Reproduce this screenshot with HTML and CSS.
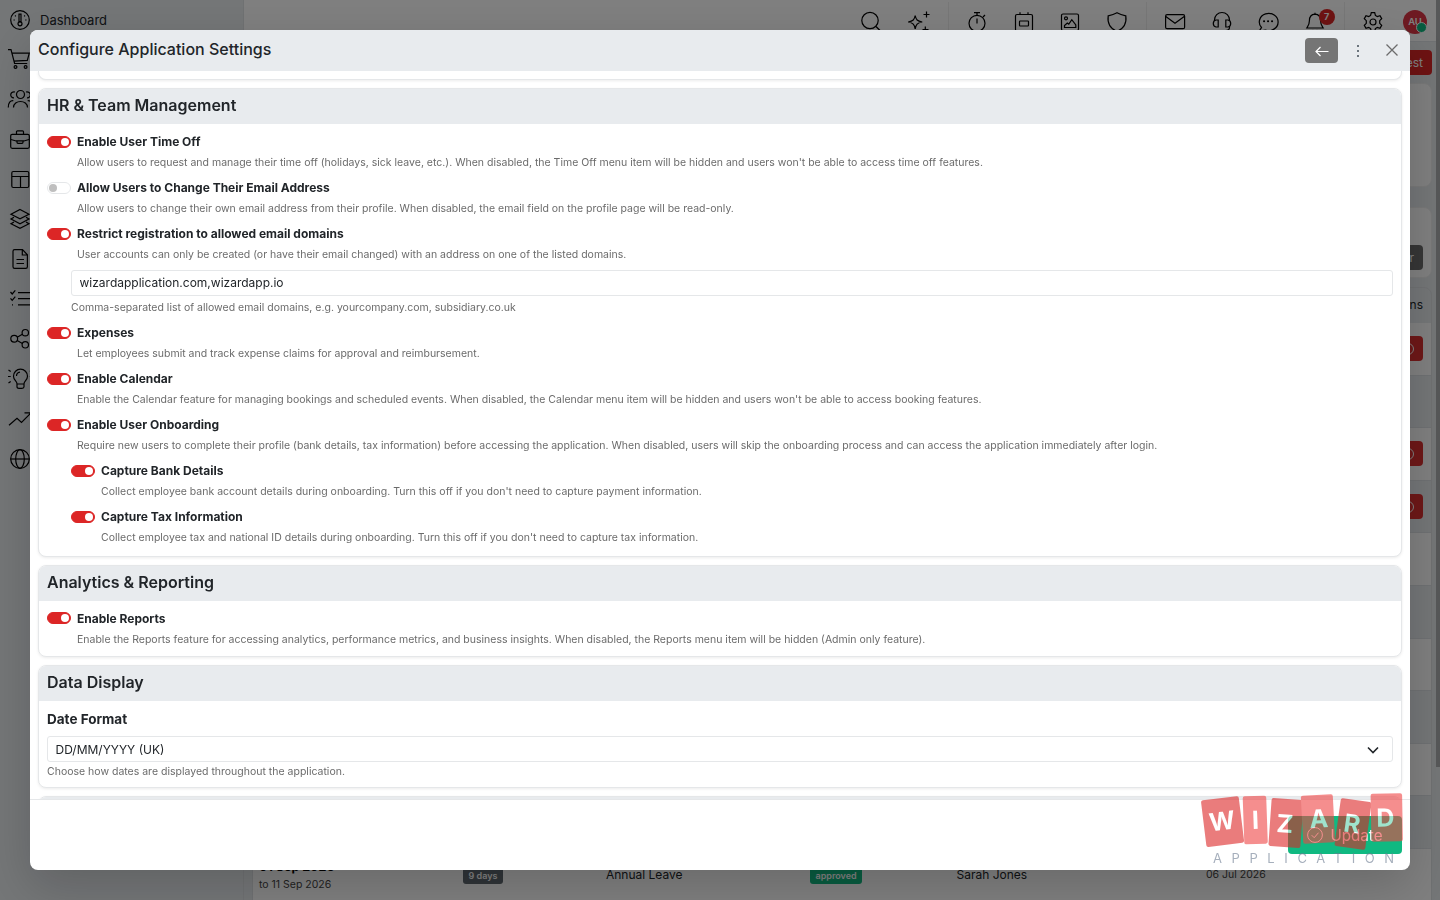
FILE: index.html
```html
<!DOCTYPE html>
<html lang="en">
<head>
  <meta charset="UTF-8" />
  <meta name="viewport" content="width=device-width, initial-scale=1.0">
  <title>Configure Application Settings</title>
  <link rel="stylesheet" href="styles.css">
</head>
<body>
  <div class="app">
    <nav class="sidebar">
      <a class="nav-item"><svg class="icon" viewBox="0 0 20 20"><circle cx="10" cy="10" r="9.3"/><path d="M9 4.2h2v7.5H9zM3.5 10h1.3M15.2 10h1.3M5 5.5l.8.8M15 5.5l-.8.8"/><circle cx="10" cy="13.8" r="2"/></svg><span>Dashboard</span></a>
      <a class="nav-item"><svg class="icon" viewBox="0 0 20 20"><path d="M-2-.3H1l3.6 13.8h12.6M1.9 3.2h17.4l-2 7.2-13.3.8"/><circle cx="5.5" cy="17" r="1.4"/><circle cx="15.6" cy="17" r="1.4"/></svg></a>
      <a class="nav-item"><svg class="icon" viewBox="0 0 20 20"><circle cx="10.500" cy="4.500" r="4"/><path d="M3.500 17.500c0-8 14-8 14 0M5 2C-.5 1-.5 8 4 7.800M-1.700 17.500c0-5 2-7 5-6.800M16 2c5.500-1 5.500 6 1 5.800M22.700 17.500c0-5-2-7-5-6.800"/></svg></a>
      <a class="nav-item"><svg class="icon" viewBox="0 0 20 20"><rect x=".7" y="4.300" width="18.600" height="14" rx="1.500"/><path d="M6.500 4V1.800q0-1 1-1h5q1 0 1 1V4M1 9.500l6 1.800M19 9.500l-6 1.800M7 10.800h6v1.500q0 1-1 1H8q-1 0-1-1z"/></svg></a>
      <a class="nav-item"><svg class="icon" viewBox="0 0 20 20"><rect x="1.800" y="1.500" width="17" height="16" rx="1.500"/><path d="M2 6.500h17M10.500 6.500v11"/></svg></a>
      <a class="nav-item"><svg class="icon" viewBox="0 0 20 20"><path d="M10 .5l9 4.700-9 4.700-9-4.700zM4 8.300L1 10l9 4.700 9-4.700-3-1.700M4 13L1 14.700l9 4.700 9-4.700-3-1.700"/></svg></a>
      <a class="nav-item"><svg class="icon" viewBox="0 0 20 20"><path d="M12.500.7H4.600q-1.600 0-1.600 1.600v15.400q0 1.600 1.600 1.600h11.200q1.600 0 1.600-1.600V5.800zM12.300 1v5h5M6.500 10.500h7.500M6.500 14.500h7.500"/></svg></a>
      <a class="nav-item"><svg class="icon" viewBox="0 0 20 20"><path d="M8 3.700h14M8 9.700h14M8 15.800h14M.5 3l1.700 2L5.300 1.400M.5 9.300l1.700 2 3.100-3.600M2 15.800h1"/></svg></a>
      <a class="nav-item"><svg class="icon" viewBox="0 0 20 20"><circle cx="4.200" cy="9.800" r="3.400"/><circle cx="15.300" cy="3.700" r="3.200"/><circle cx="15.300" cy="15.800" r="3.200"/><path d="M7.200 8.300l5.200-3M7.200 11.500l5.200 3"/></svg></a>
      <a class="nav-item"><svg class="icon" viewBox="0 0 20 20"><path d="M7 14.800c0-3-3.500-3.700-3.500-7.600a7 7 0 0114 0c0 3.900-3.500 4.600-3.500 7.600v3q0 1.500-2 1.500H9q-2 0-2-1.500zM7 15h7M6.500 7c0-2 1.500-3.500 3.500-3.800M-1.500 1l2.200 1.500M-2 7.500H.7M-1.500 14l2.200-1.500M22 1l-2.200 1.500M22.500 7.500h-2.700"/></svg></a>
      <a class="nav-item"><svg class="icon" viewBox="0 0 20 20"><path d="M-1 16.200l8-7 4.500 4.300L21 3.800M14.500 3.800H21v6"/></svg></a>
      <a class="nav-item"><svg class="icon" viewBox="0 0 20 20"><circle cx="10" cy="10" r="9.300"/><ellipse cx="10" cy="10" rx="4.300" ry="9.300"/><path d="M.7 10h18.600"/></svg></a>
    </nav>

    <div class="main">
      <header class="topbar">
        <div class="tools">
          <svg class="icon" viewBox="0 0 20 20"><circle cx="9" cy="8.500" r="8.200"/><path d="M15 14.500l5 5"/></svg>
          <svg class="icon" viewBox="0 0 20 20"><path d="M7.200 3.500c.8 4.200 2 5.500 7 6.500-5 1-6.200 2.400-7 7-.8-4.600-2-6-7-7 5-1 6.200-2.300 7-6.500zM18.500-.5v6M15.500 2.500h6M17.300 14.500v6M14.500 17.500h6"/></svg>
        </div>
        <div class="tools">
          <svg class="icon" viewBox="0 0 20 20"><circle cx="10" cy="11.300" r="8"/><path d="M7 .6h6M10 .6v3M10 6.500v5M16 5l2-2"/></svg>
          <svg class="icon" viewBox="0 0 20 20"><rect x="1.500" y="2.500" width="17" height="16.500" rx="1.500"/><path d="M6 .2v2.500M14 .2v2.500"/><rect x="5.500" y="9" width="9" height="5" rx=".7"/></svg>
          <svg class="icon" viewBox="0 0 20 20"><rect x="1.500" y="2" width="17" height="16.500" rx="1.500"/><circle cx="6" cy="6.300" r="1.500"/><path d="M4.500 15.500v-2L7.300 11l1.500 1.200 3-4.500 4 5.300v2.500z"/></svg>
          <svg class="icon" viewBox="0 0 20 20"><path d="M10 .8c2.500 1.400 5.200 2.300 8.800 3 1 7.200-1.500 12.500-8.800 15.700C2.700 16.300.2 11 1.200 3.800 4.800 3.100 7.500 2.200 10 .8z"/></svg>
        </div>
        <div class="tools">
          <svg class="icon" viewBox="0 0 20 20"><rect x=".6" y="2.700" width="19" height="14" rx="1.500"/><path d="M.8 4.500l9.200 6.700 9.200-6.700"/></svg>
          <svg class="icon" viewBox="0 0 20 20"><path d="M2.500 9V8a7.500 7.500 0 0115 0v1M17.500 14v1.500q0 3-4 3"/><path d="M6.200 8v7H4q-2.700-.5-2.700-3.500T4 8zM13.800 8v7H16q2.700-.5 2.700-3.500T16 8z"/></svg>
          <svg class="icon" viewBox="0 0 20 20"><path d="M3.500 15.500a9.400 8.600 0 113.800 2.500L1 19.300z"/><path class="dots" d="M6 9.300h.1M10 9.300h.1M14 9.300h.1"/></svg>
          <span class="bell"><svg class="icon" viewBox="0 0 20 20"><path d="M10 2.200V.8M10 2.200c-4.500.3-5.600 3.500-5.600 6.500 0 4-1.500 5.500-2.600 7.300h16.400c-1.100-1.800-2.600-3.300-2.600-7.300 0-3-1.100-6.200-5.600-6.500zM7.500 18c.8 2 4.200 2 5 0"/></svg><b>7</b></span>
        </div>
        <div class="tools last">
          <svg class="icon" viewBox="0 0 20 20"><path d="M8.300.7h3.400l.7 2.700 1.900 1.100 2.700-.8 1.700 3-2 2v2.600l2 2-1.700 3-2.700-.8-1.900 1.100-.7 2.700H8.300l-.7-2.700-1.900-1.100-2.700.8-1.700-3 2-2V8.700l-2-2 1.700-3 2.700.8 1.900-1.100z"/><circle cx="10" cy="10" r="3"/></svg>
          <span class="avatar">AU</span>
        </div>
      </header>

      <div class="content">
        <div class="page-actions"><span class="btn-request">Request</span></div>
        <div class="panel summary"></div>
        <div class="panel filters"><span class="btn-filter">Filter</span></div>
        <div class="table">
          <div class="thead">Actions</div>
          <div class="tr"><span class="btn-cancel"><i></i></span></div>
          <div class="tr"></div>
          <div class="tr"><span class="btn-cancel"><i></i></span></div>
          <div class="tr"><span class="btn-cancel"><i></i></span></div>
          <div class="tr"></div>
          <div class="tr"></div>
          <div class="tr"></div>
          <div class="tr"></div>
          <div class="tr"></div>
          <div class="tr"></div>
          <div class="tr leave">
            <div class="dates"><strong>01 Sep 2026</strong><span>to 11 Sep 2026</span></div>
            <div><span class="badge">9 days</span></div>
            <div>Annual Leave</div>
            <div><span class="badge approved">approved</span></div>
            <div>Sarah Jones</div>
            <div class="muted">06 Jul 2026</div>
          </div>
        </div>
      </div>
      <div class="scroll-thumb"></div>
    </div>
  </div>

  <div class="backdrop"></div>

  <div class="modal">
    <div class="modal-header">
      <h1>Configure Application Settings</h1>
      <button class="btn-back"><svg viewBox="0 0 14 12"><path d="M13.500 6.500H1M5.500 2L1 6.500 5.500 11"/></svg></button>
      <button class="btn-more"><svg viewBox="0 0 2 12"><path d="M0 0h2v2H0zM0 5h2v2H0zM0 10h2v2H0z"/></svg></button>
      <button class="btn-close"><svg viewBox="0 0 12 12"><path d="M.5.5l11 11M11.500.5l-11 11"/></svg></button>
    </div>

    <div class="modal-body">
      <section class="card card-end"></section>

      <section class="card">
        <h2>HR &amp; Team Management</h2>
        <div class="card-body team">
          <div class="option">
            <label><i class="switch on"></i>Enable User Time Off</label>
            <p>Allow users to request and manage their time off (holidays, sick leave, etc.). When disabled, the Time Off menu item will be hidden and users won't be able to access time off features.</p>
          </div>
          <div class="option">
            <label><i class="switch"></i>Allow Users to Change Their Email Address</label>
            <p>Allow users to change their own email address from their profile. When disabled, the email field on the profile page will be read-only.</p>
          </div>
          <div class="option">
            <label><i class="switch on"></i>Restrict registration to allowed email domains</label>
            <p>User accounts can only be created (or have their email changed) with an address on one of the listed domains.</p>
          </div>
          <div class="domains">
            <input type="text" value="wizardapplication.com,wizardapp.io">
            <small>Comma-separated list of allowed email domains, e.g. yourcompany.com, subsidiary.co.uk</small>
          </div>
          <div class="option">
            <label><i class="switch on"></i>Expenses</label>
            <p>Let employees submit and track expense claims for approval and reimbursement.</p>
          </div>
          <div class="option">
            <label><i class="switch on"></i>Enable Calendar</label>
            <p>Enable the Calendar feature for managing bookings and scheduled events. When disabled, the Calendar menu item will be hidden and users won't be able to access booking features.</p>
          </div>
          <div class="option">
            <label><i class="switch on"></i>Enable User Onboarding</label>
            <p>Require new users to complete their profile (bank details, tax information) before accessing the application. When disabled, users will skip the onboarding process and can access the application immediately after login.</p>
          </div>
          <div class="option nested">
            <label><i class="switch on"></i>Capture Bank Details</label>
            <p>Collect employee bank account details during onboarding. Turn this off if you don't need to capture payment information.</p>
          </div>
          <div class="option nested">
            <label><i class="switch on"></i>Capture Tax Information</label>
            <p>Collect employee tax and national ID details during onboarding. Turn this off if you don't need to capture tax information.</p>
          </div>
        </div>
      </section>

      <section class="card">
        <h2>Analytics &amp; Reporting</h2>
        <div class="card-body">
          <div class="option">
            <label><i class="switch on"></i>Enable Reports</label>
            <p>Enable the Reports feature for accessing analytics, performance metrics, and business insights. When disabled, the Reports menu item will be hidden (Admin only feature).</p>
          </div>
        </div>
      </section>

      <section class="card">
        <h2>Data Display</h2>
        <div class="card-body field">
          <h3>Date Format</h3>
          <div class="select"><span>DD/MM/YYYY (UK)</span><svg viewBox="0 0 12 8"><path d="M1 1.500l5 5 5-5"/></svg></div>
          <small>Choose how dates are displayed throughout the application.</small>
        </div>
      </section>

      <section class="card"><h2></h2></section>
    </div>

    <div class="modal-footer">
      <button class="btn-update"><svg viewBox="0 0 16 16"><circle cx="8" cy="8" r="7.400"/><path d="M4.700 8.200l2.500 2.500 4.300-5"/></svg>Update</button>
    </div>

    <!-- brand mark floats over the footer -->
    <svg class="brand" viewBox="0 0 210 80">
      <g class="dark">
        <rect x="3.500" y="8" width="38" height="47" rx="2" transform="rotate(-7 23 31)"/>
        <rect x="70" y="9" width="32" height="48" rx="2" transform="rotate(4 86 33)"/>
        <rect x="137.500" y="10" width="31" height="48" rx="2" transform="rotate(8 153 34)"/>
      </g>
      <g class="light">
        <rect x="43.500" y="6" width="23.500" height="48" rx="2" transform="rotate(-2 55 30)"/>
        <rect x="102" y="5" width="32" height="48" rx="2" transform="rotate(-3 117 29)"/>
        <rect x="171" y="3.500" width="31.500" height="48" rx="2" transform="rotate(-1 186 28)"/>
      </g>
      <g class="letters">
        <text x="22" y="40" transform="rotate(-7 22 31)">W</text>
        <text x="55.500" y="39" transform="rotate(-2 55 31)">I</text>
        <text x="85" y="42.500" transform="rotate(4 85 34)">Z</text>
        <text x="119" y="37.500" transform="rotate(-3 119 29)">A</text>
        <text x="152" y="42.500" transform="rotate(8 152 34)">R</text>
        <text x="185.500" y="36.500" transform="rotate(-1 185 28)">D</text>
      </g>
      <text class="tagline" x="13" y="73">APPLICATION</text>
    </svg>
  </div>
</body>
</html>
```
FILE: styles.css
```css
* {
  box-sizing: border-box;
}
body {
  margin: 0;
  height: 900px;
  overflow: hidden;
  font-family: Inter, "Liberation Sans", sans-serif;
  font-size: 12px;
  color: #212529;
}
h1, h2, h3, p {
  margin: 0;
}
svg {
  fill: none;
  stroke: currentColor;
  overflow: visible;
}
button {
  border: 0;
  padding: 0;
  background: none;
  font: inherit;
}

/* page behind the dialog */
.app {
  display: flex;
  height: 900px;
  background: #e8ecef;
}
.icon {
  width: 20px;
  height: 20px;
  stroke-width: 1.2;
  flex: none;
  color: #000;
}
.dots {
  stroke-width: 2;
  stroke-linecap: round;
}
.sidebar {
  width: 244px;
  border-right: 1px solid #dfe2e5;
  font-size: 13px;
}
.nav-item {
  display: flex;
  align-items: center;
  gap: 10px;
  height: 39.9px;
  padding-left: 10px;
}
.main {
  flex: 1;
  position: relative;
}
.topbar {
  display: flex;
  justify-content: flex-end;
  height: 42px;
  padding: 2px 13px 0 0;
  background: #fff;
  border-bottom: 1px solid #dee2e6;
}
.tools {
  display: flex;
  gap: 26.5px;
  padding: 0 19px 0 18.5px;
  align-items: center;
  border-right: 1px solid #eee;
}
.tools:first-child {
  padding-right: 20px;
}
.tools.last {
  border: 0;
  gap: 20px;
  padding-right: 0;
}
.bell {
  position: relative;
  display: flex;
}
.bell b {
  position: absolute;
  left: 14px;
  top: -3px;
  width: 16px;
  height: 16px;
  border-radius: 8px;
  background: #dc2626;
  color: #fff;
  font-size: 9px;
  line-height: 15px;
  text-align: center;
}
.avatar {
  position: relative;
  width: 24px;
  height: 24px;
  border-radius: 50%;
  background: #dc3545;
  color: #fff;
  font-size: 9.5px;
  font-weight: 600;
  line-height: 24px;
  text-align: center;
}
.avatar::after {
  content: "";
  position: absolute;
  right: 0;
  bottom: 1px;
  width: 9px;
  height: 9px;
  border-radius: 50%;
  border: 1px solid #fff;
  background: #10b981;
}
.content {
  padding: 8px 8px 0;
}
.page-actions {
  display: flex;
  justify-content: flex-end;
  margin-bottom: 8px;
}
.btn-request, .btn-filter, .btn-cancel {
  height: 25px;
  padding: 0 9px;
  border-radius: 4px;
  background: #dc2626;
  color: #fff;
  line-height: 25px;
}
.panel {
  background: #fff;
  border: 1px solid #f0f0f0;
  border-radius: 8px;
}
.summary {
  height: 104px;
  margin-bottom: 20px;
}
.filters {
  display: flex;
  justify-content: flex-end;
  align-items: flex-end;
  height: 71px;
  padding: 7px 8px;
  margin-bottom: 9px;
}
.btn-filter {
  background: #6c6c6c;
}
.table {
  border: 1px solid #dfe2e5;
  border-radius: 8px 8px 0 0;
  overflow: hidden;
}
.thead {
  height: 35px;
  padding-right: 8px;
  line-height: 34px;
  text-align: right;
}
.tr {
  display: flex;
  justify-content: flex-end;
  align-items: center;
  height: 52.6px;
  padding-right: 8px;
  background: #fff;
  border-bottom: 1px solid #dee2e6;
}
.tr:nth-child(odd) {
  background: #e8ecef;
}
.btn-cancel {
  display: flex;
  align-items: center;
  background: #dc3030;
}
.btn-cancel i {
  width: 12px;
  height: 12px;
  border: 1px solid #fff;
  border-radius: 50%;
}
.tr.leave {
  display: grid;
  grid-template-columns: 204px 143px 204px 146.5px 249.5px 1fr;
  padding-left: 6px;
  background: #fff;
  white-space: nowrap;
}
.dates {
  display: flex;
  flex-direction: column;
  gap: 4px;
  color: #000;
}
.dates strong {
  font-size: 12.5px;
}
.dates span, .muted {
  font-size: 10.5px;
  color: #444;
}
.badge {
  display: inline-block;
  height: 18px;
  padding: 0 5.5px;
  border-radius: 3px;
  background: #5f6870;
  color: #fff;
  font-size: 9px;
  font-weight: 600;
  line-height: 20px;
}
.badge.approved {
  background: #10b981;
}
.scroll-thumb {
  position: absolute;
  top: 0;
  right: 0;
  width: 4px;
  height: 767px;
  background: #aeb0b2;
}
.backdrop {
  position: fixed;
  inset: 0;
  background: rgba(0, 0, 0, 0.5);
}

/* dialog */
.modal {
  position: fixed;
  inset: 30px;
  display: flex;
  flex-direction: column;
  background: #fff;
  border-radius: 8px;
  box-shadow: 0 16px 48px rgba(0, 0, 0, 0.175);
}
.modal-header {
  display: flex;
  align-items: center;
  height: 41px;
  padding: 0 12px 0 8px;
  background: #e8ebee;
  border-radius: 8px 8px 0 0;
}
.modal-header h1 {
  flex: 1;
  font-size: 16px;
  font-weight: 500;
  line-height: 36px;
  height: 40px;
}
.modal-header button {
  display: flex;
  align-items: center;
  justify-content: center;
}
.btn-back {
  width: 33px;
  height: 25px;
  border-radius: 4px;
  background: #757575;
  color: #fff;
}
.btn-back svg {
  width: 14px;
  stroke-width: 1.2;
}
.btn-more {
  width: 40px;
  color: #6c757d;
}
.btn-more svg {
  width: 2px;
  fill: currentColor;
  stroke: none;
}
.modal-header .btn-close {
  width: 12px;
  margin-left: 8px;
  padding-bottom: 2px;
  color: #6c6c6c;
}
.btn-close svg {
  width: 12px;
  stroke-width: 1.3;
}
.modal-body {
  display: flex;
  flex-direction: column;
  gap: 8px;
  flex: 1;
  min-height: 0;
  padding: 0 8px;
  overflow: hidden;
}
.card {
  flex: none;
  border: 1px solid #e5e7e9;
  border-radius: 8px;
  background: #fff;
  box-shadow: 0 1px 3px rgba(0, 0, 0, 0.08);
}
.card-end {
  height: 9px;
  border-top: 0;
  border-radius: 0 0 8px 8px;
}
.card h2 {
  height: 35px;
  padding: 0 8px;
  background: #e8ebee;
  border-radius: 7px 7px 0 0;
  font-size: 16px;
  font-weight: 600;
  line-height: 33px;
}
.card-body {
  padding: 8px 8px 1.5px;
}
.card-body.team {
  padding-bottom: 2.6px;
}
.option {
  height: 46px;
}
.option.nested {
  padding-left: 24px;
}
.option label {
  display: flex;
  align-items: center;
  gap: 6px;
  height: 19px;
  font-weight: 700;
}
.option p {
  margin: 3px 0 0 30px;
  font-size: 10.5px;
  line-height: 18px;
  color: #6b6b6b;
}
.switch {
  width: 24px;
  height: 12px;
  padding: 1px;
  border: 1px solid #e5e7e9;
  border-radius: 6px;
}
.switch::after {
  content: "";
  display: block;
  width: 8px;
  height: 8px;
  border-radius: 50%;
  background: #bfbfbf;
}
.switch.on {
  padding-left: 13px;
  border-color: #dc2626;
  background: #dc2626;
}
.switch.on::after {
  background: #fff;
}
.domains {
  height: 53px;
  padding-left: 24px;
}
.domains input {
  display: block;
  width: 100%;
  height: 26px;
  padding: 0 7.5px 1px;
  border: 1px solid #e5e7e9;
  border-radius: 3px;
  font: inherit;
  color: #212529;
}
small {
  display: block;
  font-size: 10.5px;
  line-height: 18px;
  margin-top: 3px;
  color: #6b6b6b;
}
.card-body.field {
  padding-bottom: 6.5px;
}
.field h3 {
  font-size: 13.5px;
  font-weight: 700;
  line-height: 20px;
  margin-bottom: 7px;
}
.select {
  display: flex;
  align-items: center;
  justify-content: space-between;
  height: 26px;
  padding: 1px 13px 0 7.5px;
  border: 1px solid #e5e7e9;
  border-radius: 3px;
}
.select svg {
  width: 12px;
  stroke-width: 1.6;
}
.field small {
  margin-top: 0.5px;
}
.modal-footer {
  display: flex;
  align-items: center;
  justify-content: flex-end;
  height: 71px;
  padding-right: 8px;
  border-top: 1px solid #e5e7e9;
}
.btn-update {
  display: flex;
  align-items: center;
  justify-content: center;
  gap: 7px;
  width: 114px;
  height: 38px;
  border-radius: 4px;
  background: #10b981;
  color: #fff;
}
.modal-footer .btn-update {
  font-size: 15.2px;
}
.btn-update svg {
  width: 16px;
}
.brand {
  position: absolute;
  right: 0;
  bottom: 0;
  width: 210px;
  height: 80px;
  opacity: 0.6;
  stroke: none;
}
.dark {
  fill: #dc2626;
}
.light {
  fill: #ef4444;
}
.letters {
  fill: #fff;
  font-size: 25px;
  font-weight: 700;
  text-anchor: middle;
}
.tagline {
  fill: #6b7a90;
  font-size: 13px;
  letter-spacing: 9.6px;
}
```
